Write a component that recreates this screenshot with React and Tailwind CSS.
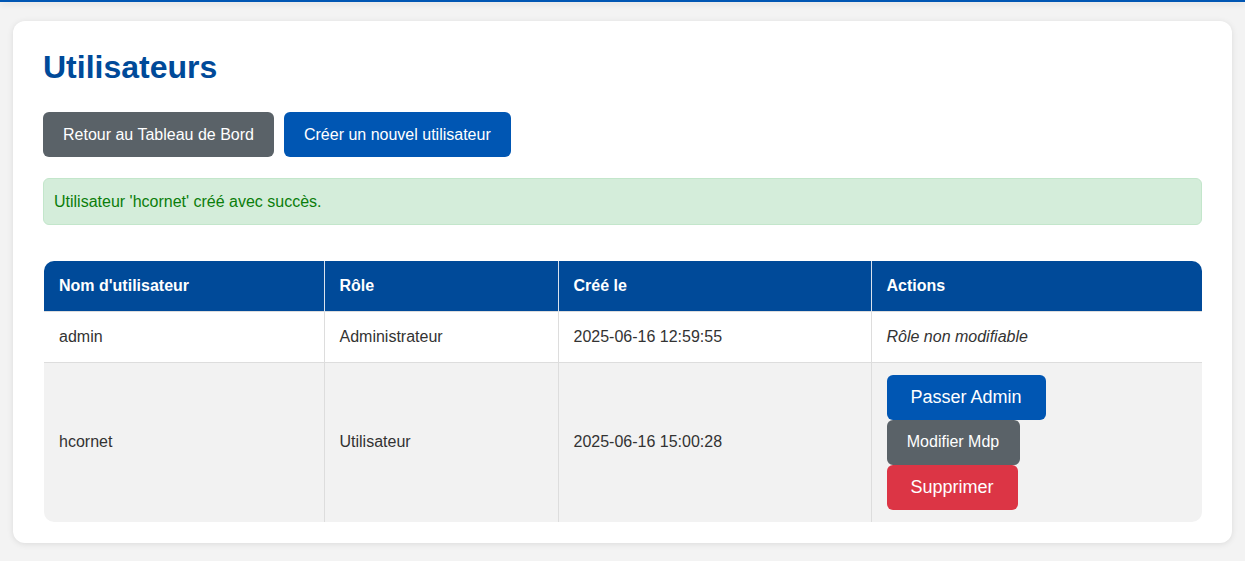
import React from 'react';

const users = [
    { username: 'admin', role: 'Administrateur', createdAt: '2025-06-16 12:59:55', locked: true },
    { username: 'hcornet', role: 'Utilisateur', createdAt: '2025-06-16 15:00:28', locked: false },
];

const App = () => {
    return (
        <div className="min-h-screen bg-[#f3f3f3] font-['Liberation_Sans',Arial,sans-serif] text-[#333]">
            {/* header strip, only its bottom edge is visible */}
            <div className="h-[2px] bg-[#0056b3] shadow-[0_2px_6px_rgba(0,0,0,0.15)]" />

            <div className="mx-[13px] mt-[19px] bg-white rounded-[12px] shadow-[0_1px_6px_rgba(0,0,0,0.1)] px-[30px] pt-[30px] pb-[21px]">
                <h1 className="h-[32px] text-[32px] leading-none font-bold text-[#004a99] mb-[29px]">Utilisateurs</h1>

                <div className="flex gap-[10px]">
                    <button className="h-[45px] px-[20px] rounded-[6px] bg-[#5a6268] text-white text-[16px]">
                        Retour au Tableau de Bord
                    </button>
                    <button className="h-[45px] px-[20px] rounded-[6px] bg-[#0056b3] text-white text-[16px]">
                        Créer un nouvel utilisateur
                    </button>
                </div>

                <div className="mt-[21px] h-[47px] flex items-center px-[10px] rounded-[6px] bg-[#d4edda] border border-[#c3e6cb] text-[#0b7d0b] text-[16px]">
                    Utilisateur 'hcornet' créé avec succès.
                </div>

                <div className="mt-[36px] ml-[1px] rounded-[10px] overflow-hidden">
                    <table className="w-full border-collapse text-left text-[16px]">
                        <thead>
                            <tr className="bg-[#004a99] text-white h-[50px]">
                                <th className="w-[280px] px-[15px] font-bold">Nom d'utilisateur</th>
                                <th className="w-[234px] px-[15px] font-bold border-l border-[#d9e2ee]">Rôle</th>
                                <th className="w-[313px] px-[15px] font-bold border-l border-[#d9e2ee]">Créé le</th>
                                <th className="px-[15px] font-bold border-l border-[#d9e2ee]">Actions</th>
                            </tr>
                        </thead>
                        <tbody>
                            {users.map((user, i) => (
                                <tr key={user.username} className={i % 2 ? 'bg-[#f2f2f2]' : 'bg-white'}>
                                    <td className={`px-[15px] border-t border-[#ddd] ${user.locked ? 'h-[51px]' : 'h-[160px]'}`}>{user.username}</td>
                                    <td className="px-[15px] border-t border-l border-[#ddd]">{user.role}</td>
                                    <td className="px-[15px] border-t border-l border-[#ddd]">{user.createdAt}</td>
                                    <td className="px-[15px] border-t border-l border-[#ddd]">
                                        {user.locked ? (
                                            <em>Rôle non modifiable</em>
                                        ) : (
                                            <div className="flex flex-col items-start">
                                                <button className="h-[45px] w-[159px] rounded-[6px] bg-[#0056b3] text-white text-[18px]">Passer Admin</button>
                                                <button className="h-[45px] w-[133px] rounded-[6px] bg-[#5a6268] text-white text-[16px]">Modifier Mdp</button>
                                                <button className="h-[45px] w-[131px] rounded-[6px] bg-[#dc3545] text-white text-[18px]">Supprimer</button>
                                            </div>
                                        )}
                                    </td>
                                </tr>
                            ))}
                        </tbody>
                    </table>
                </div>
            </div>
        </div>
    );
};

export default App;
